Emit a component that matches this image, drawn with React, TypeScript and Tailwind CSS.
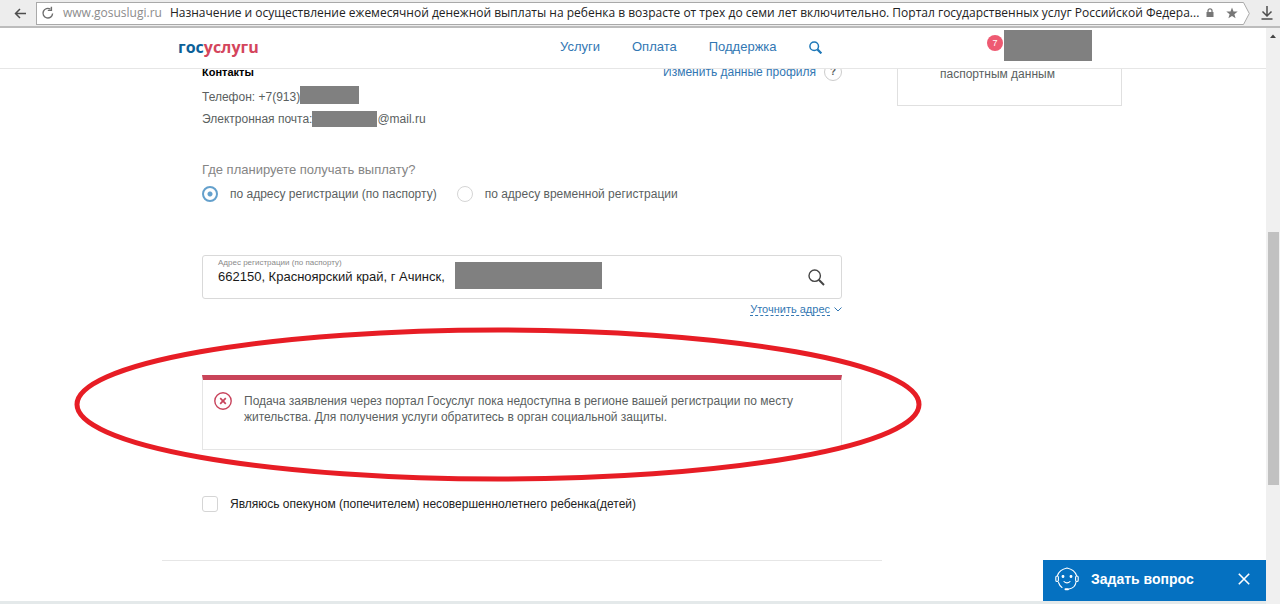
import React, { useState } from "react";

type Region = "registration" | "temporary";

const navLinks = ["Услуги", "Оплата", "Поддержка"];

const regionOptions: { id: Region; label: string }[] = [
	{ id: "registration", label: "по адресу регистрации (по паспорту)" },
	{ id: "temporary", label: "по адресу временной регистрации" },
];

function BrowserBar() {
	return (
		<div className="flex h-7 shrink-0 items-center border-b-2 border-[#bcbcbc] bg-[#ededed] font-['Open_Sans',sans-serif] text-xs leading-5">
			<button aria-label="Назад" className="flex w-9 justify-center pl-1">
				<svg width="13" height="11" viewBox="0 0 13 11" fill="none" stroke="#4d4d4d" strokeWidth="1.5">
					<path d="M12 5.5H1.5M6 1L1.5 5.5L6 10" />
				</svg>
			</button>
			<div className="flex h-[23px] min-w-0 flex-1 items-center border-y border-l border-[#a9a9a9] bg-white pl-1">
				<button aria-label="Обновить" className="shrink-0">
					<svg width="14" height="14" viewBox="0 0 14 14" fill="none" stroke="#6e6e6e" strokeWidth="1.4">
						<path d="M11.6 7.5A4.8 4.8 0 1 1 9.4 3.2" />
						<path d="M6.8 4.4H10.4V0.8" />
					</svg>
				</button>
				<span className="ml-2 shrink-0 text-[#8c8c8c]">www.gosuslugi.ru</span>
				<span className="ml-2 min-w-0 flex-1 overflow-hidden whitespace-nowrap text-[#222]">
					Назначение и осуществление ежемесячной денежной выплаты на ребенка в возрасте от трех до семи лет включительно. Портал государственных услуг Российской Федера...
				</span>
				<svg className="mr-3 shrink-0" width="8" height="10" viewBox="0 0 8 10">
					<rect x="0.5" y="4" width="7" height="5" fill="#777" />
					<path d="M2 4V2.8A2 2 0 0 1 6 2.8V4" fill="none" stroke="#777" strokeWidth="1.3" />
				</svg>
				<svg className="mr-1 shrink-0" width="12" height="12" viewBox="0 0 12 12" fill="#777">
					<path d="M6 0.5L7.5 4.4L11.7 4.6L8.4 7.2L9.6 11.3L6 9L2.4 11.3L3.6 7.2L0.3 4.6L4.5 4.4Z" />
				</svg>
			</div>
			<svg className="shrink-0" width="8" height="23" viewBox="0 0 8 23">
				<path d="M0 0.5H1.5L7.3 11.5L1.5 22.5H0" fill="#fff" stroke="#a9a9a9" />
			</svg>
			<button aria-label="Загрузки" className="flex w-[30px] shrink-0 justify-center pl-1">
				<svg width="12" height="14" viewBox="0 0 12 14" fill="none" stroke="#4d4d4d" strokeWidth="1.5">
					<path d="M6 0V10M1.5 5.5L6 10L10.5 5.5M0.5 13H11.5" />
				</svg>
			</button>
		</div>
	);
}

function SiteHeader() {
	return (
		<header className="relative z-10 flex h-[41px] shrink-0 items-center border-b border-[#e6e6e6] bg-white pr-[174px] pb-0.5 pl-[178px]">
			<a href="#" className="w-[382px] font-['Open_Sans',sans-serif] text-base leading-5 font-bold text-[#0b6098]">
				гос<span className="text-[#d4455c]">услугu</span>
			</a>
			<nav className="flex items-center gap-8 text-[13px] text-[#3277b3]">
				{navLinks.map((link) => (
					<a key={link} href="#">{link}</a>
				))}
				<button aria-label="Поиск">
					<svg width="13" height="13" viewBox="0 0 13 13" fill="none" stroke="#1f78b8" strokeWidth="1.5">
						<circle cx="5.2" cy="5.2" r="4.3" />
						<path d="M8.4 8.4L12.4 12.4" strokeWidth="2.2" />
					</svg>
				</button>
			</nav>
			<div className="ml-auto flex items-center gap-px pb-2">
				<span className="flex size-4 items-center justify-center rounded-full bg-[#ee5a72] text-[9px] text-white">7</span>
				<div className="-mb-1 h-[31px] w-[88px] bg-[#808080]" />
			</div>
		</header>
	);
}

function ErrorNotice() {
	return (
		<div className="relative mt-[59px]">
			<div role="alert" className="flex h-[75px] gap-3 border border-t-[5px] border-[#e5e5e5] border-t-[#c94459] pt-3 pr-10 pl-[11px]">
				<svg className="shrink-0" width="18" height="18" viewBox="0 0 18 18" fill="none" stroke="#c8445c">
					<circle cx="9" cy="9" r="8.2" strokeWidth="1.4" />
					<path d="M6.2 6.2L11.8 11.8M11.8 6.2L6.2 11.8" strokeWidth="1.7" />
				</svg>
				<p className="pt-px text-xs leading-4">
					Подача заявления через портал Госуслуг пока недоступна в регионе вашей регистрации по месту жительства. Для получения услуги обратитесь в орган социальной защиты.
				</p>
			</div>
			{/* red marker circle */}
			<div className="pointer-events-none absolute -top-12 -right-20 -bottom-8 -left-32">
				<svg className="size-full" viewBox="0 0 848 155" preserveAspectRatio="none" fill="none">
					<ellipse cx="424" cy="77.5" rx="421" ry="74.5" stroke="#e71d25" strokeWidth="5" />
				</svg>
			</div>
		</div>
	);
}

function ChatBar() {
	return (
		<div className="absolute right-0 bottom-[3px] flex h-[41px] w-[223px] items-center bg-[#0571c1] pb-1 pl-3 text-white">
			<svg width="24" height="24" viewBox="0 0 24 24" fill="none" stroke="#fff" strokeWidth="1.1" strokeLinecap="round">
				<path d="M2.5 8.5C4 4 7.5 2 12 1C16.5 2 20 4 21.5 8.5" />
				<rect x="0.8" y="9" width="2.6" height="5.5" rx="1.3" />
				<rect x="20.6" y="9" width="2.6" height="5.5" rx="1.3" />
				<path d="M3.5 15.5C4.3 18 5.5 19.5 7 20.5M21 15C20.5 19 18 21.3 14 22" />
				<path d="M9 14.5C10.5 16.3 13.5 16.3 15 14.5" />
				<path d="M10.5 22.3H13" strokeWidth="2" />
				<circle cx="8" cy="9.5" r="0.9" fill="#fff" />
				<circle cx="16" cy="9.5" r="0.9" fill="#fff" />
			</svg>
			<button className="ml-3 text-sm font-bold">Задать вопрос</button>
			<button aria-label="Закрыть" className="mr-4 ml-auto">
				<svg width="12" height="12" viewBox="0 0 12 12" stroke="#fff" strokeWidth="1.6">
					<path d="M0.8 0.8L11.2 11.2M11.2 0.8L0.8 11.2" />
				</svg>
			</button>
		</div>
	);
}

function Scrollbar() {
	return (
		<div className="flex w-3.5 shrink-0 flex-col items-center bg-[#f0f0f0] pt-1">
			<svg width="8" height="8" viewBox="0 0 8 8" fill="#444">
				<path d="M1 6L4 2.5L7 6Z" />
			</svg>
			<div className="mt-48 h-[253px] w-[11px] bg-[#c1c1c1]" />
		</div>
	);
}

export default function App() {
	const [region, setRegion] = useState<Region>("registration");
	const [address, setAddress] = useState("662150, Красноярский край, г Ачинск,");
	const [guardian, setGuardian] = useState(false);

	return (
		<div className="flex min-h-screen flex-col bg-white font-['Liberation_Sans',Arial,sans-serif] text-[13px] leading-4 text-[#5b5f5f]">
			<BrowserBar />
			<div className="flex flex-1">
				<div className="relative flex min-w-0 flex-1 flex-col">
					<SiteHeader />

					{/* the form is scrolled a little under the header */}
					<main className="-mt-2 flex flex-1 items-start gap-[15px] pr-36 pl-[162px]">
						<div className="min-w-0 flex-1 border-b border-[#e6e6e6] pb-12">
							<div className="mx-10">
								<div className="flex items-center justify-between pt-0.5">
									<h2 className="text-[11px] font-bold text-black">Контакты</h2>
									<div className="flex items-center gap-2">
										<a href="#" className="text-xs text-[#3277b3]">Изменить данные профиля</a>
										<button aria-label="Справка" className="flex size-[18px] items-center justify-center rounded-full border border-[#ccc] text-[10px] font-bold">?</button>
									</div>
								</div>
								<div className="mt-1 flex h-5 items-center text-xs">
									<span className="pt-1">Телефон: +7(913)</span>
									<div className="h-[18px] w-[59px] bg-[#808080]" />
								</div>
								<div className="mt-1 flex h-5 items-center text-xs">
									Электронная почта:
									<div className="h-4 w-[65px] bg-[#808080]" />
									@mail.ru
								</div>

								<fieldset className="mt-[33px]">
									<legend className="text-[13px] leading-4 text-[#858585]">Где планируете получать выплату?</legend>
									<div className="mt-2 flex gap-5">
										{regionOptions.map((o) => (
											<label key={o.id} className="flex items-center gap-3 text-xs">
												<input
													type="radio"
													name="region"
													checked={region === o.id}
													onChange={() => setRegion(o.id)}
													className="size-4 appearance-none rounded-full border border-[#d5d5d5] bg-white checked:border-2 checked:border-[#64a0cc] checked:bg-[radial-gradient(circle,#64a0cc_2px,white_3px)]"
												/>
												{o.label}
											</label>
										))}
									</div>
								</fieldset>

								<div className="mt-[53px] flex h-11 items-center rounded-[3px] border border-[#d9d9d9] pr-4 pl-[15px]">
									<div className="flex w-[237px] flex-col pb-2">
										<label htmlFor="address" className="text-[8px] leading-2 text-[#8a8a8a]">Адрес регистрации (по паспорту)</label>
										<input
											id="address"
											value={address}
											onChange={(e) => setAddress(e.target.value)}
											className="w-full text-[13px] leading-5 text-[#1a1a1a] outline-none"
										/>
									</div>
									<div className="mb-1 h-[27px] w-[147px] bg-[#808080]" />
									<button aria-label="Найти адрес" className="ml-auto">
										<svg width="17" height="17" viewBox="0 0 17 17" fill="none" stroke="#444">
											<circle cx="6.7" cy="6.7" r="5.7" strokeWidth="1.4" />
											<path d="M10.8 10.8L16 16" strokeWidth="2" />
										</svg>
									</button>
								</div>
								<div className="mt-1 flex items-center justify-end gap-1 text-[11px] text-[#3277b3]">
									<a href="#" className="border-b border-dashed border-[#3277b3] leading-3">Уточнить адрес</a>
									<svg width="8" height="5" viewBox="0 0 8 5" fill="none" stroke="#3277b3">
										<path d="M0.5 0.5L4 4L7.5 0.5" />
									</svg>
								</div>

								<ErrorNotice />

								<label className="mt-[46px] flex items-center gap-3 text-xs text-[#222]">
									<input
										type="checkbox"
										checked={guardian}
										onChange={(e) => setGuardian(e.target.checked)}
										className="size-4 appearance-none rounded-[3px] border border-[#d5d5d5] checked:bg-[#64a0cc]"
									/>
									Являюсь опекуном (попечителем) несовершеннолетнего ребенка(детей)
								</label>
							</div>
						</div>
						<aside className="h-[45px] w-[225px] shrink-0 border border-[#e0e0e0] pt-1 pl-[42px] text-xs">паспортным данным</aside>
					</main>

					<ChatBar />
					<div className="h-[3px] bg-[#e4e9ea]" />
				</div>
				<Scrollbar />
			</div>
		</div>
	);
}
